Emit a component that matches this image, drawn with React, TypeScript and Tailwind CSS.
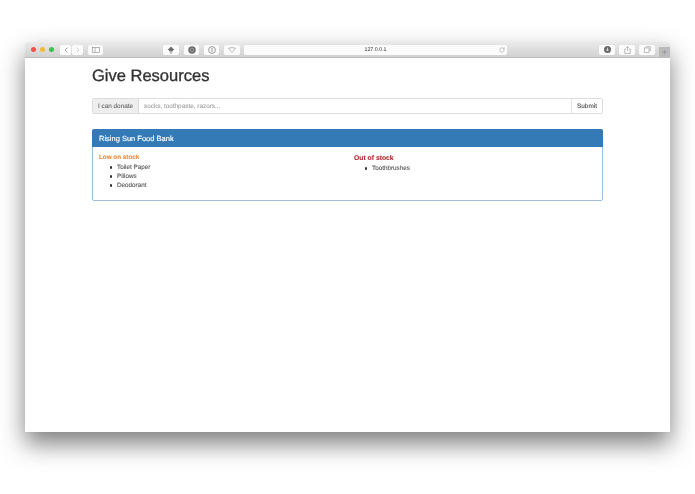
import { ChevronLeft, ChevronRight, RotateCw } from 'lucide-react'

function ToolButton({ className, children }: { className: string; children?: React.ReactNode }) {
  return (
    <div className={`h-[10px] rounded-[2px] bg-[#fbfbfb] blur-[0.3px] flex items-center justify-center shrink-0 ${className}`}>
      {children}
    </div>
  )
}

function Toolbar() {
  return (
    <div className="relative h-[16px] flex items-center pl-[6px] rounded-t-[3px] bg-gradient-to-b from-[#ebeaeb] to-[#d2d1d2] border-b border-[#bdbdbd]">
      <div className="w-[5px] h-[5px] rounded-full bg-[#f2524c] shrink-0" />
      <div className="w-[5px] h-[5px] rounded-full bg-[#f5b93a] shrink-0 ml-[4px]" />
      <div className="w-[5px] h-[5px] rounded-full bg-[#3cc04c] shrink-0 ml-[4px]" />
      <ToolButton className="w-[11px] ml-[6px]">
        <ChevronLeft className="w-[8px] h-[8px] text-[#777]" strokeWidth={2} />
      </ToolButton>
      <ToolButton className="w-[11px] ml-[1px]">
        <ChevronRight className="w-[8px] h-[8px] text-[#bbb]" strokeWidth={2} />
      </ToolButton>
      <ToolButton className="w-[15px] ml-[5px]">
        <svg className="w-[8px] h-[6px]" viewBox="0 0 16 12" fill="none" stroke="#888" strokeWidth="1.2">
          <rect x="1" y="1" width="14" height="10" />
          <path d="M6 1v10" />
        </svg>
      </ToolButton>
      <ToolButton className="w-[16px] ml-[60px]">
        <svg className="w-[8px] h-[8px]" viewBox="0 0 16 16" fill="#6e6e6e">
          <path d="M8 1 15 8h-3v2H4V8H1zM5 11h6v1.500H5zM6.500 13.500h3V15h-3z" />
        </svg>
      </ToolButton>
      <ToolButton className="w-[15px] ml-[5px]">
        <svg className="w-[8px] h-[8px]" viewBox="0 0 16 16" fill="none">
          <circle cx="8" cy="8" r="7.500" fill="#6e6e6e" />
          <circle cx="8" cy="8" r="3.500" stroke="#aaa" strokeWidth="1.500" />
        </svg>
      </ToolButton>
      <ToolButton className="w-[15px] ml-[5px]">
        <svg className="w-[8px] h-[8px]" viewBox="0 0 16 16" fill="none" stroke="#777" strokeWidth="1.500">
          <circle cx="8" cy="8" r="6.800" />
          <path d="M8 4v8" />
        </svg>
      </ToolButton>
      <ToolButton className="w-[16px] ml-[5px]">
        <svg className="w-[8px] h-[6px]" viewBox="0 0 16 12" fill="none" stroke="#999" strokeWidth="1.300">
          <path d="M1 2.500Q8-.500 15 2.500L8 11z" />
        </svg>
      </ToolButton>
      <ToolButton className="w-[263px] ml-[4px] relative">
        <span className="pt-[1.500px] text-[5.300px] leading-none text-[#333]">127.0.0.1</span>
        <RotateCw className="absolute right-[2px] top-[2px] w-[6px] h-[6px] text-[#999]" strokeWidth={2} />
      </ToolButton>
      <ToolButton className="w-[16px] ml-[92px]">
        <svg className="w-[7px] h-[7px]" viewBox="0 0 16 16">
          <circle cx="8" cy="8" r="8" fill="#666" />
          <path d="M8 3.500v7M5 8l3 3.500L11 8" stroke="#eee" strokeWidth="1.800" fill="none" />
        </svg>
      </ToolButton>
      <ToolButton className="w-[16px] ml-[4px]">
        <svg className="w-[7px] h-[8px]" viewBox="0 0 14 16" fill="none" stroke="#999" strokeWidth="1.300">
          <path d="M4 6H1.500v9h11V6H10M7 10V1M4.500 3.500 7 1l2.500 2.500" />
        </svg>
      </ToolButton>
      <ToolButton className="w-[16px] ml-[4px]">
        <svg className="w-[7px] h-[7px]" viewBox="0 0 16 16" fill="none" stroke="#999" strokeWidth="1.400">
          <path d="M5 4V1.500h9.500V11H12" />
          <rect x="1.500" y="4.500" width="10" height="10" />
        </svg>
      </ToolButton>
      <div className="absolute right-0 bottom-0 w-[11px] h-[10px] bg-[#bcbbbc] flex items-center justify-center text-[#888] text-[9px] leading-none">
        +
      </div>
    </div>
  )
}

function StockList({ title, titleClass, items, className }: { title: string; titleClass: string; items: string[]; className: string }) {
  return (
    <div className={className}>
      <div className={`leading-[9px] font-bold [-webkit-text-stroke:0.1px] ${titleClass}`}>{title}</div>
      <ul className="mt-[1px] pl-[10.500px] text-[6.300px] leading-[9px] text-[#555] [-webkit-text-stroke:0.1px_#555]">
        {items.map((item) => (
          <li key={item} className="flex items-center gap-[5px]">
            <span className="w-[2.500px] h-[2.500px] rounded-full bg-[#333]" />
            {item}
          </li>
        ))}
      </ul>
    </div>
  )
}

export default function App() {
  return (
    <div className="h-[494px] bg-white px-[25px] pt-[42px] font-['Liberation_Sans',sans-serif] overflow-hidden [text-rendering:geometricPrecision]">
      <div className="h-[390px] rounded-t-[3px] bg-white shadow-[0_12px_24px_rgba(0,0,0,0.5)]">
        <Toolbar />
        <div className="ml-[67px] w-[511px] blur-[0.3px]">
          <h1 className="text-[16.500px] leading-[20px] font-medium text-[#333] mt-[8px] h-[20px] [-webkit-text-stroke:0.35px_#333]">
            Give Resources
          </h1>

          <div className="flex h-[16px] mt-[12px] border border-[#dcdcdc] rounded-[2px] text-[6.400px] text-[#666] [-webkit-text-stroke:0.08px]">
            <div className="w-[46px] pt-[1px] bg-[#eeeeee] border-r border-[#dcdcdc] flex items-center justify-center">
              I can donate
            </div>
            <div className="flex-1 pt-[1px] flex items-center pl-[5px] text-[#a0a0a0]">socks, toothpaste, razors...</div>
            <div className="w-[31px] pt-[1px] border-l border-[#e4e4e4] flex items-center justify-center text-[#444]">
              Submit
            </div>
          </div>

          <div className="mt-[15px] h-[72px] border border-[#9fbfdc] rounded-[2px]">
            <div className="h-[18px] -mx-[1px] -mt-[1px] pt-[0.500px] bg-[#337ab7] rounded-t-[2px] flex items-center pl-[7px] text-[7.500px] font-medium text-white [-webkit-text-stroke:0.15px_#fff]">
              Rising Sun Food Bank
            </div>
            <div className="flex pl-[6px] pt-[6px]">
              <StockList
                className="w-[255px]"
                title="Low on stock"
                titleClass="text-[6.300px] text-[#f0883a]"
                items={['Toilet Paper', 'Pillows', 'Deodorant']}
              />
              <StockList
                className="mt-[1px]"
                title="Out of stock"
                titleClass="text-[6.800px] text-[#ac2a30]"
                items={['Toothbrushes']}
              />
            </div>
          </div>
        </div>
      </div>
    </div>
  )
}
